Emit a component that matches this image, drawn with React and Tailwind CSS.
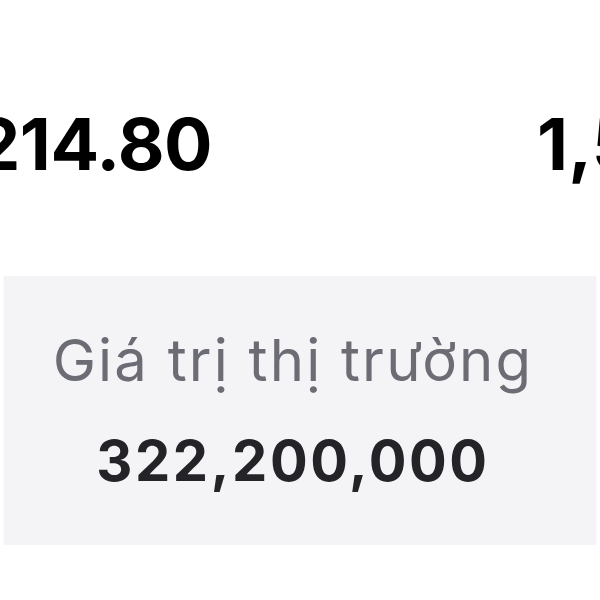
export default function App() {
  return (
    <div className="w-[600px] h-[600px] bg-white overflow-hidden relative" style={{ fontFamily: "Inter, 'Noto Sans', sans-serif" }}>
      <div className="h-[276px] flex items-start pt-[100px] whitespace-nowrap">
        <div className="-ml-[25px] text-[72px] leading-[88px] font-bold text-black tracking-[-0.5px]">214.80</div>
        <div className="ml-[325px] text-[72px] leading-[88px] font-bold text-black">1,500</div>
      </div>
      <div className="mx-[3px] h-[269px] bg-[#f4f4f7] border-x border-[#fafafc] flex flex-col items-center pt-[49px]">
        <div className="text-[58px] leading-[70px] text-[#6c6c74] tracking-[2.2px] pr-[14px]">Giá trị thị trường</div>
        <div className="mt-[32px] text-[56px] leading-[68px] font-bold text-[#242428] tracking-[2.6px] pr-[14px]">322,200,000</div>
      </div>
    </div>
  );
}
